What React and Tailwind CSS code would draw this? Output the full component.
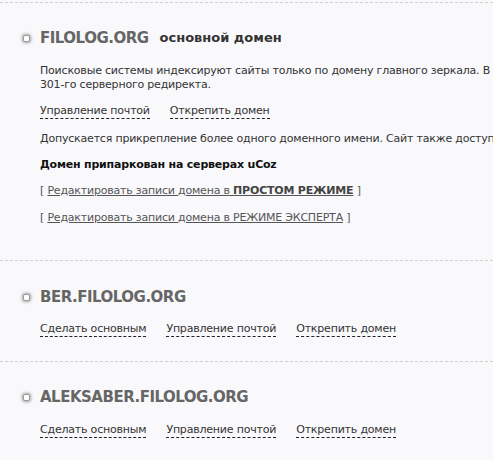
import React from 'react';

const Bullet = () => (
  <span className="mr-[10px] inline-block h-[7px] w-[7px] shrink-0 rounded-[2px] border border-[#9a9a9a] bg-white shadow-[0_0_3px_1px_rgba(0,0,0,0.35)]" />
);

const DashLink = ({ children }) => (
  <a href="#" className="border-b border-dashed border-[#222] pb-[1px] leading-[13px] text-[#333] no-underline">
    {children}
  </a>
);

const DomainTitle = ({ name, extra }) => (
  <div className="flex items-center pl-[23px]">
    <Bullet />
    <span className="text-[15px] font-bold tracking-[-0.5px] text-[#666]">{name}</span>
    {extra && <span className="ml-[11px] text-[13px] font-bold tracking-[0px] text-[#333]">{extra}</span>}
  </div>
);

const Section = ({ children, className = '' }) => (
  <div className={`border-t border-dashed border-[#cfcfcf] ${className}`}>{children}</div>
);

export default function App() {
  return (
    <div
      className="h-[460px] w-[493px] overflow-hidden bg-[#f9f9fb] pt-[2px] text-[11px] leading-[14px] tracking-[-0.2px] text-[#333]"
      style={{ fontFamily: '"DejaVu Sans", Verdana, sans-serif' }}
    >
      <Section className="h-[258px] pt-[28px]">
        <DomainTitle name="FILOLOG.ORG" extra="основной домен" />
        <div className="pl-[40px]">
          <p className="mt-[19px] whitespace-nowrap">
            Поисковые системы индексируют сайты только по домену главного зеркала. В остальных случаях используется
            <br />
            301-го серверного редиректа.
          </p>
          <div className="mt-[12px] flex gap-[20px]">
            <DashLink>Управление почтой</DashLink>
            <DashLink>Открепить домен</DashLink>
          </div>
          <p className="mt-[13px] whitespace-nowrap">
            Допускается прикрепление более одного доменного имени. Сайт также доступен по всем прикреплённым доменам.
          </p>
          <p className="mt-[12px] font-bold text-[#111]">Домен припаркован на серверах uCoz</p>
          <p className="mt-[12px] text-[#555]">
            [ <a href="#" className="text-[#555] underline">Редактировать записи домена в <b className="text-[#444]">ПРОСТОМ РЕЖИМЕ</b></a> ]
          </p>
          <p className="mt-[13px] text-[#555]">
            [ <a href="#" className="text-[#555] underline">Редактировать записи домена в РЕЖИМЕ ЭКСПЕРТА</a> ]
          </p>
        </div>
      </Section>

      <Section className="h-[101px] pt-[29px]">
        <DomainTitle name="BER.FILOLOG.ORG" />
        <div className="mt-[18px] flex gap-[20px] pl-[40px]">
          <DashLink>Сделать основным</DashLink>
          <DashLink>Управление почтой</DashLink>
          <DashLink>Открепить домен</DashLink>
        </div>
      </Section>

      <Section className="pt-[28px]">
        <DomainTitle name="ALEKSABER.FILOLOG.ORG" />
        <div className="mt-[19px] flex gap-[20px] pl-[40px]">
          <DashLink>Сделать основным</DashLink>
          <DashLink>Управление почтой</DashLink>
          <DashLink>Открепить домен</DashLink>
        </div>
      </Section>
    </div>
  );
}
